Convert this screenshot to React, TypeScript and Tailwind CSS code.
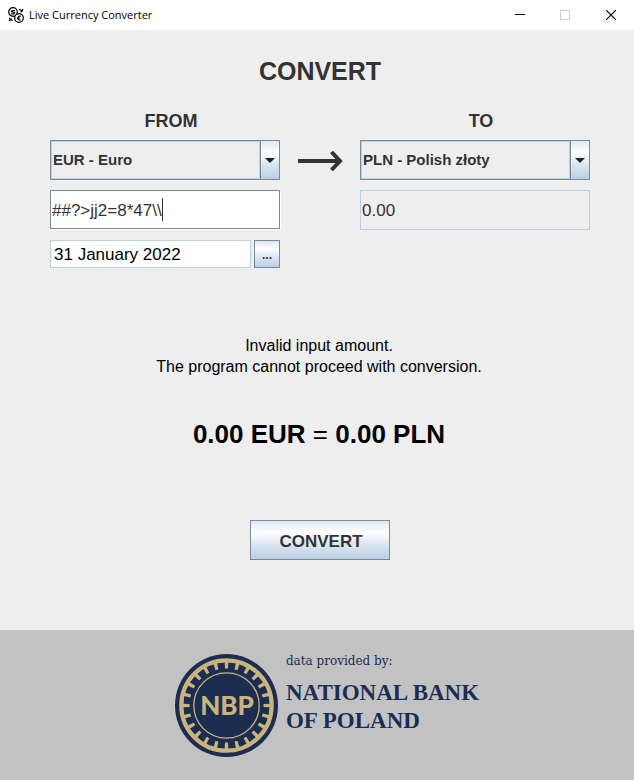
import { useState } from "react";

const METAL =
  "bg-[linear-gradient(to_bottom,#dde8f3_0%,#ffffff_30%,#dde8f3_60%,#b8cfe5_100%)]";

function AppIcon() {
  return (
    <svg className="h-4 w-4" viewBox="0 0 16 16" fill="none" stroke="#000" strokeWidth="1.2" aria-hidden="true">
      <circle cx="5" cy="5" r="4.3" />
      <path d="M7 3.5H4.2L3.4 4.6L6.6 5.5L6 6.8H3.2" />
      <circle cx="11" cy="11" r="4.3" fill="#fff" />
      <path d="M12.8 9.2H11L9.9 10.4V12L11 13H12.8M9 11H12" />
      <path d="M11 2.2L14 3.6L12.6 5M15 2.2L14 3.6M14 3.6V5" />
      <path d="M1 10.8L2.5 12.4L1 14M2.5 12.4L4.6 13.8M3.6 11.4L2.5 12.4" />
    </svg>
  );
}

function TitleBar() {
  return (
    <header className="flex h-[30px] items-center bg-white pl-2">
      <AppIcon />
      <h1 className="ml-[5px] flex-1 font-['Open_Sans',sans-serif] text-[11px] text-black">
        Live Currency Converter
      </h1>
      <div className="flex">
        <button type="button" aria-label="Minimize" className="flex h-[28px] w-[45px] items-center justify-center">
          <svg width="10" height="10" shapeRendering="crispEdges" aria-hidden="true">
            <path d="M0 4.5H10" stroke="#000" />
          </svg>
        </button>
        <button type="button" aria-label="Maximize" disabled className="flex h-[28px] w-[46px] items-center justify-center">
          <svg width="10" height="10" fill="none" shapeRendering="crispEdges" aria-hidden="true">
            <path d="M.5 .5H9.5V9.5H.5Z" stroke="#ccc" />
          </svg>
        </button>
        <button type="button" aria-label="Close" className="flex h-[28px] w-[46px] items-center justify-center">
          <svg width="10" height="10" aria-hidden="true">
            <path d="M0 0L10 10M10 0L0 10" stroke="#000" strokeWidth="1.2" />
          </svg>
        </button>
      </div>
    </header>
  );
}

type CurrencySelectProps = {
  id: string;
  value: string;
  options: string[];
  onChange: (value: string) => void;
};

function CurrencySelect({ id, value, options, onChange }: CurrencySelectProps) {
  return (
    <div className="relative h-10 border border-[#7a8a99]">
      <select
        id={id}
        value={value}
        onChange={(e) => onChange(e.target.value)}
        className="h-full w-full appearance-none pl-[2px] pr-6 text-[15px] font-bold text-[#333] outline-none"
      >
        {options.map((option) => (
          <option key={option}>{option}</option>
        ))}
      </select>
      <span className="pointer-events-none absolute inset-y-0 left-0 right-[19px] border border-[#b8cfe5]" />
      <span
        className={`pointer-events-none absolute inset-y-0 right-0 flex w-[19px] items-center justify-center border-l border-[#7a8a99] ${METAL}`}
      >
        <svg width="10" height="5" aria-hidden="true">
          <path d="M0 0H10L5 5Z" fill="#222" />
        </svg>
      </span>
    </div>
  );
}

function BankSeal() {
  return (
    <svg className="h-[103px] w-[103px]" viewBox="0 0 103 103" role="img" aria-label="NBP">
      <circle cx="51.5" cy="51.5" r="51.5" fill="#1c2d52" />
      <circle cx="51.5" cy="51.5" r="45.2" fill="none" stroke="#c8b47c" strokeWidth="4.2" />
      <circle
        cx="51.5"
        cy="51.5"
        r="40.5"
        fill="none"
        stroke="#c8b47c"
        strokeWidth="7"
        pathLength="240"
        strokeDasharray="3.2 6.8"
        strokeDashoffset="1.6"
      />
      <circle cx="51.5" cy="51.5" r="32.7" fill="none" stroke="#c8b47c" strokeWidth="1.3" />
      <text x="52" y="61" textAnchor="middle" fill="#c8b47c" className="font-['Lato',sans-serif] text-[26px] font-black">
        NBP
      </text>
    </svg>
  );
}

export default function App() {
  const [from, setFrom] = useState("EUR - Euro");
  const [to, setTo] = useState("PLN - Polish złoty");
  const [amount, setAmount] = useState("##?>jj2=8*47\\\\");
  const [date, setDate] = useState("31 January 2022");
  const currencies = ["EUR - Euro", "PLN - Polish złoty"];

  return (
    <div className="flex min-h-screen flex-col bg-[#eee] font-['Liberation_Sans',Arial,sans-serif] text-[#333]">
      <TitleBar />
      <main className="flex flex-1 flex-col pb-[70px] pl-[50px] pr-[44px] pt-6">
        <h2 className="text-center text-[25px] font-bold leading-[34px]">CONVERT</h2>

        <div className="mt-5 grid grid-cols-[minmax(0,1fr)_80px_minmax(0,1fr)]">
          <section className="flex flex-col">
            <label htmlFor="from" className="mb-[5px] block pl-3 text-center text-[18px] font-bold leading-[27px]">
              FROM
            </label>
            <CurrencySelect id="from" value={from} options={currencies} onChange={setFrom} />
            <div className="relative mt-[10px]">
              <input
                aria-label="Amount to convert"
                value={amount}
                onChange={(e) => setAmount(e.target.value)}
                className="block h-[39px] w-full border border-[#7a8a99] bg-white pl-px pt-[2px] text-[17px] shadow-[1px_1px_0_#fff] outline-none"
              />
              <span className="absolute left-[112px] top-2 h-[23px] w-px bg-[#333]" />
            </div>
            <div className="mt-[11px] flex gap-[3px]">
              <input
                aria-label="Date"
                value={date}
                onChange={(e) => setDate(e.target.value)}
                className="h-7 min-w-0 flex-1 border border-[#b8cfe5] bg-white pl-[3px] pt-[2px] text-[17px] text-black outline-none"
              />
              <button
                type="button"
                aria-label="Choose date"
                className={`h-7 w-[26px] border border-[#7a8a99] pt-[2px] text-[12px] font-bold ${METAL}`}
              >
                ...
              </button>
            </div>
          </section>

          <div className="flex justify-center pt-[42px]">
            <svg width="46" height="22" fill="none" stroke="#333" strokeWidth="4" aria-hidden="true">
              <path d="M1 11H43M34.5 2L43 11L34.5 20" />
            </svg>
          </div>

          <section>
            <label htmlFor="to" className="mb-[5px] block pl-3 text-center text-[18px] font-bold leading-[27px]">
              TO
            </label>
            <CurrencySelect id="to" value={to} options={currencies} onChange={setTo} />
            <input
              aria-label="Converted amount"
              readOnly
              value="0.00"
              className="mt-[10px] block h-10 w-full border border-[#b8cfe5] bg-[#eee] pl-px pt-[2px] text-[17px] outline-none"
            />
          </section>
        </div>

        <p className="mt-[67px] pr-[2px] text-center text-[16px] leading-[21px] text-black">
          Invalid input amount.
          <br />
          The program cannot proceed with conversion.
        </p>
        <p className="mt-[41px] pr-[2px] text-center text-[26px] leading-[32px] text-black">
          <b>0.00 EUR</b> = <b>0.00 PLN</b>
        </p>
        <button
          type="button"
          className={`mx-auto mt-[70px] h-10 w-[140px] border border-[#7a8a99] pl-[2px] pt-[3px] text-[17px] font-bold ${METAL}`}
        >
          CONVERT
        </button>
      </main>

      <footer className="flex h-[150px] justify-center gap-2 bg-[#c2c2c2] pl-5 pt-6 text-[#1c2d52]">
        <BankSeal />
        <div>
          <p className="font-['DejaVu_Serif',serif] text-[12px] leading-[14px]">data provided by:</p>
          <p className="mt-[11px] font-['Liberation_Serif',serif] text-[23px] font-bold leading-[28px]">
            NATIONAL BANK
            <br />
            OF POLAND
          </p>
        </div>
      </footer>
    </div>
  );
}
